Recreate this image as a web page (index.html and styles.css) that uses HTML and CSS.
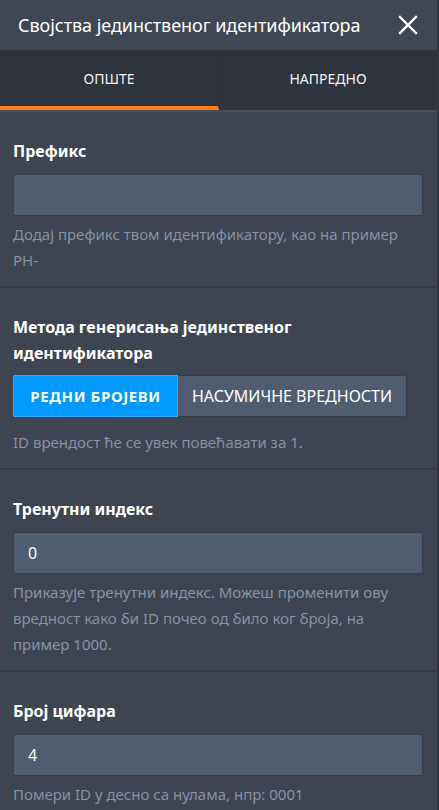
FILE: index.html
```html
<!DOCTYPE html>
<html lang="sr">
<head>
<meta charset="utf-8">
<title>Својства јединственог идентификатора</title>
<link rel="stylesheet" href="styles.css">
</head>
<body>
<div class="panel">
  <header class="header">
    <h1 class="title">Својства јединственог идентификатора</h1>
    <button class="close" aria-label="Затвори">
      <svg width="20" height="20" viewBox="0 0 20 20"><path d="M2 2 L18 18 M18 2 L2 18" stroke="#ffffff" stroke-width="2.4" stroke-linecap="square" fill="none"/></svg>
    </button>
  </header>
  <nav class="tabs">
    <div class="tab active">ОПШТЕ</div>
    <div class="tab">НАПРЕДНО</div>
  </nav>
  <main class="content">
    <section class="field">
      <div class="label">Префикс</div>
      <div class="input"></div>
      <p class="help">Додај префикс твом идентификатору, као на пример PH-</p>
    </section>
    <section class="field">
      <div class="label">Метода генерисања јединственог идентификатора</div>
      <div class="toggle">
        <div class="opt selected">РЕДНИ БРОЈЕВИ</div>
        <div class="opt">НАСУМИЧНЕ ВРЕДНОСТИ</div>
      </div>
      <p class="help help-gap">ID врендост ће се увек повећавати за 1.</p>
    </section>
    <section class="field">
      <div class="label">Тренутни индекс</div>
      <div class="input">0</div>
      <p class="help">Приказује тренутни индекс. Можеш променити ову вредност како би ID почео од било ког броја, на пример 1000.</p>
    </section>
    <section class="field">
      <div class="label">Број цифара</div>
      <div class="input">4</div>
      <p class="help">Помери ID у десно са нулама, нпр: 0001</p>
    </section>
  </main>
</div>
</body>
</html>
```
FILE: styles.css
```css
* { box-sizing: border-box; }
html, body {
  margin: 0;
  padding: 0;
  width: 439px;
  height: 810px;
  overflow: hidden;
  background: #3e4450;
  font-family: "Noto Sans", "Open Sans", "DejaVu Sans", sans-serif;
}
.panel {
  width: 439px;
  height: 810px;
  border-right: 2px solid #30353e;
  background: #3e4450;
}
.header {
  height: 50px;
  background: #404753;
  display: flex;
  align-items: center;
  justify-content: space-between;
  padding: 0 19px 0 18px;
}
.title {
  margin: 0;
  font-size: 18px;
  font-weight: 400;
  color: #ffffff;
  letter-spacing: -0.05px;
}
.close {
  background: none;
  border: none;
  padding: 0;
  width: 20px;
  height: 20px;
  display: flex;
}
.tabs {
  display: flex;
  height: 62px;
  background: #2f343c;
  border-bottom: 2px solid #474e5a;
}
.tab {
  flex: 1;
  display: flex;
  align-items: center;
  justify-content: center;
  color: #f2f2f2;
  font-size: 14px;
  border-bottom: 4px solid transparent;
}
.tab.active {
  border-bottom-color: #ff7e1d;
  border-right: 1px solid #2a2e35;
}
.content {
  display: flex;
  flex-direction: column;
}
.field {
  padding: 26px 14px 13px 13px;
  border-bottom: 2px solid #363b45;
}
.field:last-child { border-bottom: none; }
.label {
  color: #ffffff;
  font-size: 16px;
  font-weight: 700;
  line-height: 26px;
  padding-right: 60px;
}
.input {
  margin-top: 10px;
  height: 42px;
  background: #515c6e;
  border: 1px solid #383e49;
  border-radius: 2px;
  color: #ffffff;
  font-size: 16px;
  display: flex;
  align-items: center;
  padding-left: 14px;
}
.help {
  margin: 5px 0 0;
  color: #8791a3;
  font-size: 15px;
  line-height: 26px;
  padding-right: 20px;
}
.help-gap { margin-top: 12px; }
.toggle {
  margin-top: 9px;
  display: flex;
  height: 42px;
}
.opt {
  display: flex;
  align-items: center;
  justify-content: center;
  font-size: 16px;
  color: #ffffff;
  background: #515c6e;
  border: 1px solid #383e49;
  border-left: none;
  padding: 0 10px;
  width: 229px;
  border-radius: 0 2px 2px 0;
  white-space: nowrap;
}
.opt.selected {
  width: 165px;
  background: #0099ff;
  border: 1px solid #3aaaf3;
  font-weight: 700;
  font-size: 15px;
  letter-spacing: 0.6px;
  border-radius: 2px 0 0 2px;
}
```
